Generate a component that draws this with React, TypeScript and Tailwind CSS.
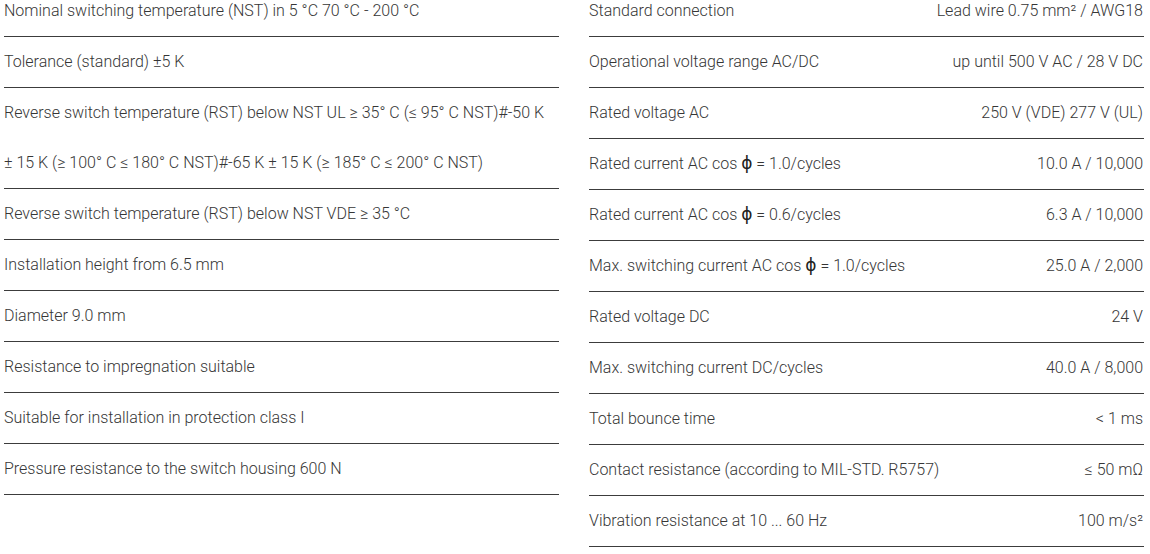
import type { ReactNode } from "react";

const LEFT: string[] = [
  "Nominal switching temperature (NST) in 5 °C 70 °C - 200 °C",
  "Tolerance (standard) ±5 K",
  "Reverse switch temperature (RST) below NST UL ≥ 35° C (≤ 95° C NST)#-50 K ±\u00a015 K (≥ 100° C ≤ 180° C NST)#-65 K ± 15 K (≥ 185° C ≤ 200° C NST)",
  "Reverse switch temperature (RST) below NST VDE ≥ 35 °C",
  "Installation height from 6.5 mm",
  "Diameter 9.0 mm",
  "Resistance to impregnation suitable",
  "Suitable for installation in protection class I",
  "Pressure resistance to the switch housing 600 N",
];

const RIGHT: [string, string][] = [
  ["Standard connection", "Lead wire 0.75 mm² / AWG18"],
  ["Operational voltage range AC/DC", "up until 500 V AC / 28 V DC"],
  ["Rated voltage AC", "250 V (VDE) 277 V (UL)"],
  ["Rated current AC cos ϕ = 1.0/cycles", "10.0 A / 10,000"],
  ["Rated current AC cos ϕ = 0.6/cycles", "6.3 A / 10,000"],
  ["Max. switching current AC cos ϕ = 1.0/cycles", "25.0 A / 2,000"],
  ["Rated voltage DC", "24 V"],
  ["Max. switching current DC/cycles", "40.0 A / 8,000"],
  ["Total bounce time", "< 1 ms"],
  ["Contact resistance (according to MIL-STD. R5757)", "≤ 50 mΩ"],
  ["Vibration resistance at 10 ... 60 Hz", "100 m/s²"],
];

// the phi glyph comes from a heavier fallback font in the original
function withPhi(text: string): ReactNode {
  const parts = text.split("ϕ");
  if (parts.length === 1) return text;
  return (
    <>
      {parts[0]}
      <span
        className="font-normal text-[17px] leading-none text-[#222]"
        style={{ fontFamily: "'DejaVu Sans', sans-serif" }}
      >
        ϕ
      </span>
      {parts[1]}
    </>
  );
}

export default function App() {
  return (
    <div className="h-[554px] overflow-hidden bg-white">
      <div
        className="grid grid-cols-[555px_555px] gap-x-[30px] pl-[4px] -mt-[14px] text-[16px] font-light text-[#363636] leading-[50px]"
        style={{ fontFamily: "Roboto, 'DejaVu Sans', sans-serif" }}
      >
        <div className="flex flex-col">
          {LEFT.map((t, i) => (
            <div key={i} className="border-b border-[#3c3c3c]">
              {t}
            </div>
          ))}
        </div>
        <div className="flex flex-col">
          {RIGHT.map(([k, v], i) => (
            <div key={i} className="flex h-[51px] justify-between border-b border-[#3c3c3c]">
              <span>{withPhi(k)}</span>
              <span className="pr-[1px]">{v}</span>
            </div>
          ))}
        </div>
      </div>
    </div>
  );
}
